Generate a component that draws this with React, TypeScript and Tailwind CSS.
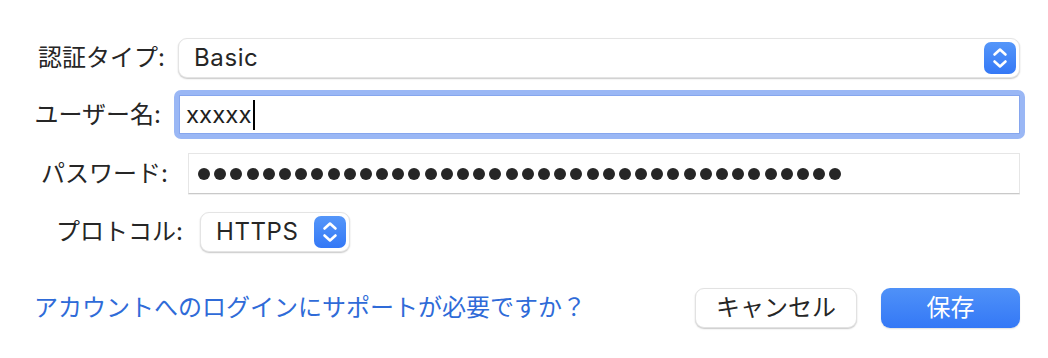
import React from "react";

const font = "font-['Inter','Noto_Sans_CJK_JP',sans-serif]";

function Stepper() {
  return (
    <div className="flex h-[32px] w-[32px] shrink-0 items-center justify-center rounded-[7px] bg-gradient-to-b from-[#5596f9] to-[#3478f6]">
      <svg width="32" height="32" viewBox="0 0 32 32" fill="none">
        <path d="M10.5 12.5 L16 7.5 L21.5 12.5" stroke="white" strokeWidth="2.6" strokeLinecap="round" strokeLinejoin="round" />
        <path d="M10.5 19.5 L16 24.5 L21.5 19.5" stroke="white" strokeWidth="2.6" strokeLinecap="round" strokeLinejoin="round" />
      </svg>
    </div>
  );
}

function Popup({ value, className }: { value: string; className: string }) {
  return (
    <div
      className={`flex h-[40px] items-center justify-between rounded-[9px] border border-[#e4e4e4] bg-white pl-[15px] pr-[3px] shadow-[0_1px_1.5px_rgba(0,0,0,0.22)] ${className}`}
    >
      <span className="text-[24px] tracking-[0.6px] text-[#262626]">{value}</span>
      <Stepper />
    </div>
  );
}

export default function App() {
  const dots = Array.from({ length: 40 });

  return (
    <div className={`h-[358px] w-[1048px] bg-white pt-[38px] pr-[28px] ${font}`}>
      {/* 認証タイプ */}
      <div className="flex h-[40px] items-center">
        <label className="w-[165px] text-right text-[24px] text-[#262626]">認証タイプ:</label>
        <Popup value="Basic" className="ml-[13px] flex-1" />
      </div>

      {/* ユーザー名 */}
      <div className="mt-[12px] flex h-[49px] items-center">
        <label className="w-[161px] text-right text-[24px] text-[#262626]">ユーザー名:</label>
        <div className="ml-[13px] -mr-[5px] h-full flex-1 rounded-[7px] bg-[#9ab7f5] p-[5px]">
          <div className="flex h-full items-center border border-[#86a6ee] bg-white pl-[6px]">
            <span className="text-[24px] leading-none text-[#1f1f1f]">xxxxx</span>
            <span className="ml-[1px] h-[30px] w-[2px] bg-black" />
          </div>
        </div>
      </div>

      {/* パスワード */}
      <div className="mt-[14px] flex h-[41px] items-center">
        <label className="w-[168px] text-right text-[24px] text-[#262626]">パスワード:</label>
        <div className="ml-[20px] flex h-full flex-1 items-center gap-[4.2px] border border-[#e6e6e6] border-b-[#c9c9c9] bg-white pl-[9px] shadow-[0_1px_0_rgba(0,0,0,0.06)]">
          {dots.map((_, i) => (
            <span key={i} className="h-[12px] w-[12px] shrink-0 rounded-full bg-[#262626]" />
          ))}
        </div>
      </div>

      {/* プロトコル */}
      <div className="mt-[18px] flex h-[40px] items-center">
        <label className="w-[183px] text-right text-[24px] text-[#262626]">プロトコル:</label>
        <Popup value="HTTPS" className="ml-[17px] w-[150px]" />
      </div>

      {/* footer */}
      <div className="mt-[36px] flex h-[40px] items-center">
        <a className="ml-[34px] text-[24px] text-[#2f6bd8]">アカウントへのログインにサポートが必要ですか？</a>
        <div className="flex-1" />
        <button className="flex h-[40px] w-[162px] items-center justify-center rounded-[9px] border border-[#e2e2e2] bg-white text-[24px] text-[#262626] shadow-[0_1px_1.5px_rgba(0,0,0,0.22)]">
          キャンセル
        </button>
        <button className="ml-[24px] flex h-[40px] w-[139px] items-center justify-center rounded-[9px] bg-gradient-to-b from-[#4f91f8] to-[#3478f6] text-[24px] text-white shadow-[0_1px_1.5px_rgba(0,0,0,0.12)]">
          保存
        </button>
      </div>
    </div>
  );
}
